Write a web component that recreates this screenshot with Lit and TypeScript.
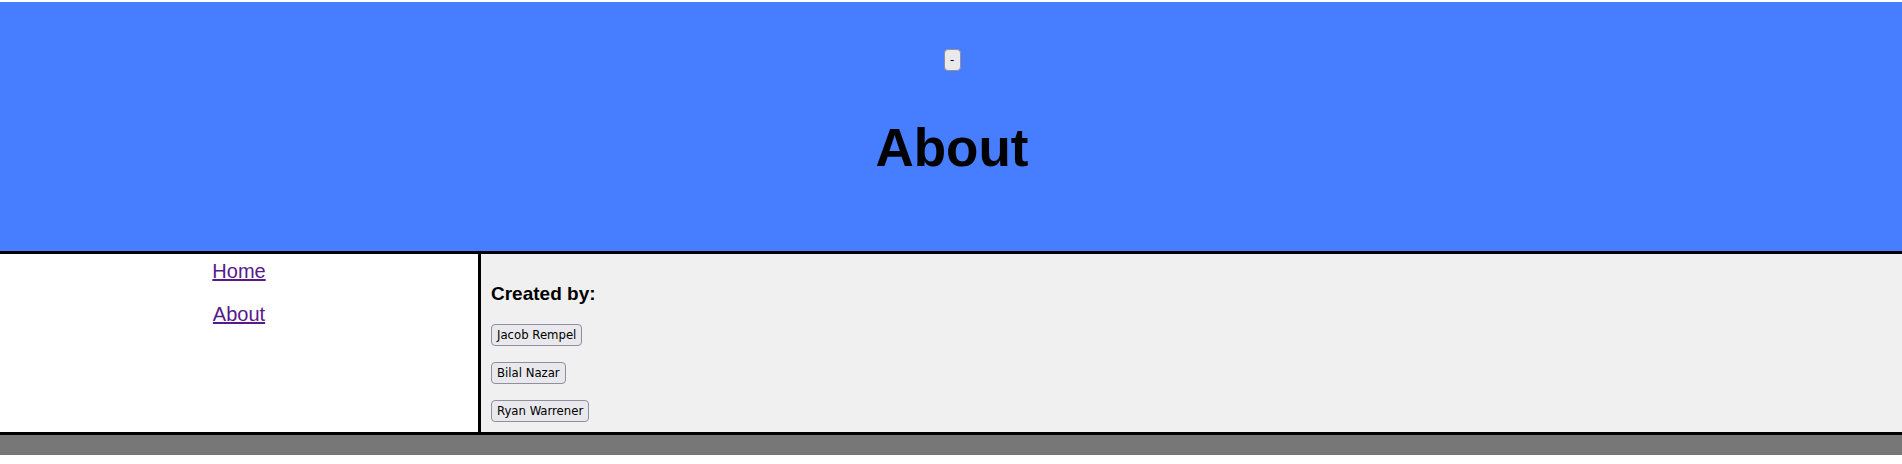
import { LitElement, html, css } from "lit";
import { customElement } from "lit/decorators.js";

@customElement("app-root")
export class AppRoot extends LitElement {
  static styles = css`
    :host {
      display: block;
      padding-top: 2px;
      background: #fff;
      color: #000;
      font-family: "Liberation Sans", Arial, sans-serif;
    }
    header {
      display: flex;
      flex-direction: column;
      align-items: center;
      gap: 46px;
      padding: 47px 8px 73px 10px;
      background: #477eff;
      border-bottom: 3px solid #000;
    }
    h1 {
      margin: 0;
      font-size: 53px;
      line-height: 61px;
    }
    button {
      box-sizing: border-box;
      min-width: 17px;
      height: 22px;
      margin: 0;
      padding: 0 5px;
      border: 1px solid #8f8f9d;
      border-radius: 4px;
      background: #e9e9ed;
      color: #000;
      font: 13px/20px "DejaVu Sans Condensed", Tahoma, sans-serif;
    }
    .body {
      display: grid;
      grid-template-columns: minmax(0, 481fr) minmax(0, 1421fr);
      border-bottom: 3px solid #000;
    }
    nav {
      display: flex;
      flex-direction: column;
      align-items: center;
      gap: 20px;
      padding: 6px 0;
      border-right: 3px solid #000;
    }
    a {
      color: #551a8b;
      font-size: 20px;
      line-height: 23px;
    }
    main {
      display: flex;
      flex-direction: column;
      align-items: flex-start;
      gap: 16px;
      padding: 28px 10px 10px;
      background: #f0f0f0;
    }
    h3 {
      margin: 0 0 2px;
      font-size: 19px;
      line-height: 24px;
    }
    footer {
      height: 20px;
      background: #777;
    }
  `;

  private authors = ["Jacob Rempel", "Bilal Nazar", "Ryan Warrener"];

  render() {
    return html`
      <header>
        <button type="button">-</button>
        <h1>About</h1>
      </header>
      <div class="body">
        <nav>
          <a href="#home">Home</a>
          <a href="#about">About</a>
        </nav>
        <main>
          <h3>Created by:</h3>
          ${this.authors.map((name) => html`<button type="button">${name}</button>`)}
        </main>
      </div>
      <footer></footer>
    `;
  }
}
